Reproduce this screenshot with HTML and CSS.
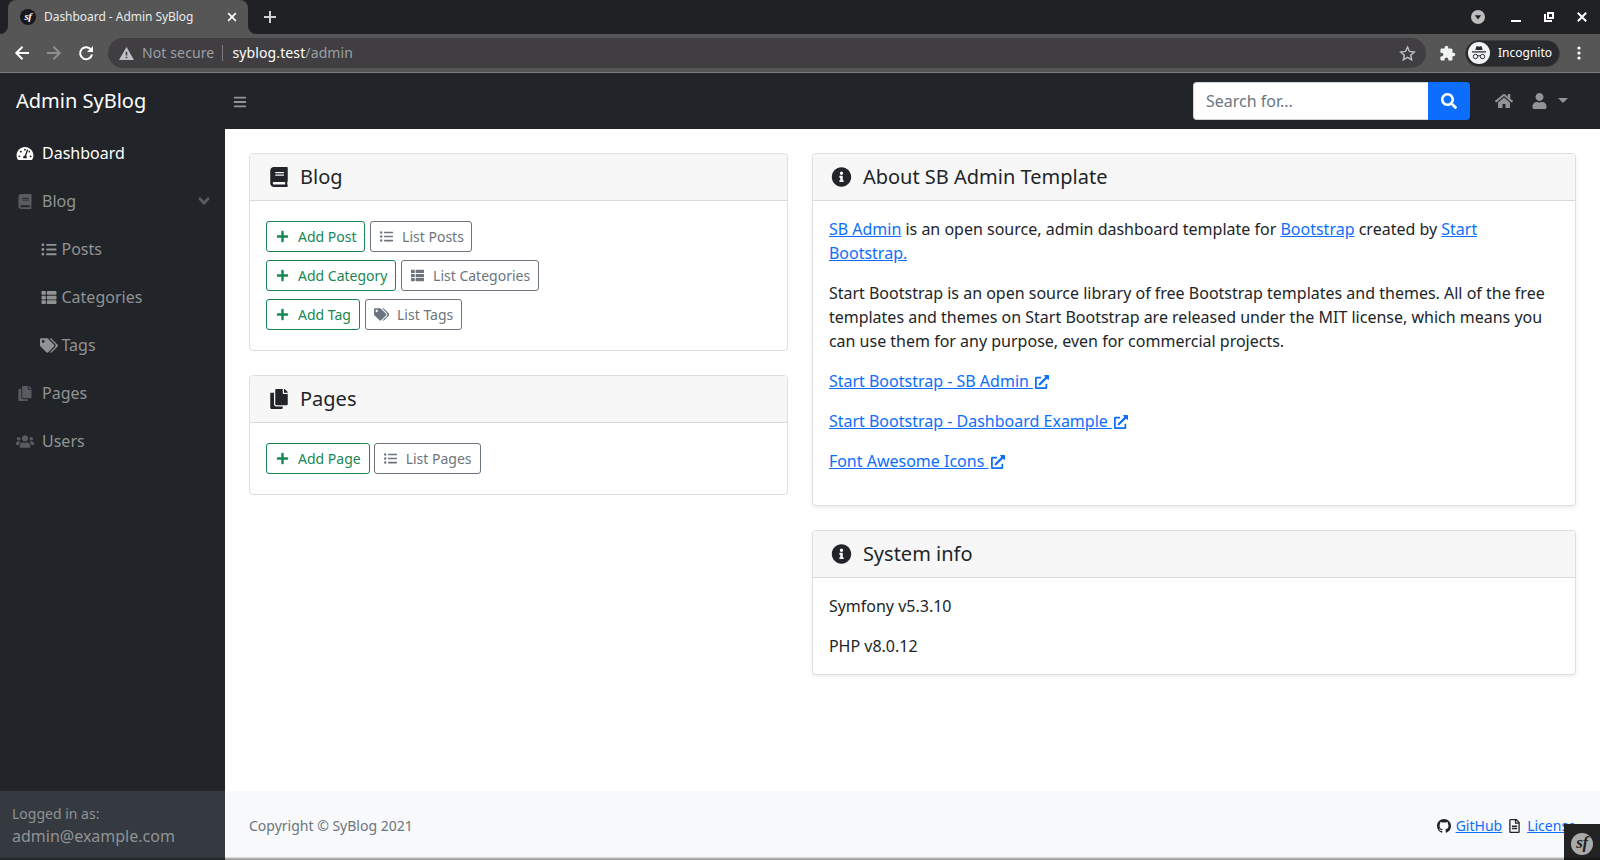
FILE: index.html
```
<!DOCTYPE html>
<html lang="en">
<head>
<meta charset="utf-8">
<title>Dashboard - Admin SyBlog</title>
<link rel="stylesheet" href="styles.css">
</head>
<body>
<svg class="defs" aria-hidden="true">
  <symbol id="gauge" viewBox="0 0 576 512"><path d="M288 32C128.94 32 0 160.94 0 320c0 52.8 14.25 102.26 39.06 144.8 5.61 9.62 16.3 15.2 27.44 15.2h443c11.14 0 21.83-5.58 27.44-15.2C561.75 422.26 576 372.8 576 320c0-159.06-128.94-288-288-288zm0 64c14.71 0 26.58 10.13 30.32 23.65-1.11 2.26-2.64 4.23-3.45 6.67l-9.22 27.67c-5.13 3.49-10.97 6.01-17.64 6.01-17.67 0-32-14.33-32-32S270.33 96 288 96zM96 384c-17.67 0-32-14.33-32-32s14.33-32 32-32 32 14.33 32 32-14.33 32-32 32zm48-160c-17.67 0-32-14.33-32-32s14.33-32 32-32 32 14.33 32 32-14.33 32-32 32zm246.77-72.41l-61.33 184C343.13 347.33 352 364.54 352 384c0 11.72-3.38 22.55-8.88 32H232.88c-5.5-9.45-8.88-20.28-8.88-32 0-33.94 26.5-61.43 59.9-63.59l61.34-184.01c4.17-12.56 17.73-19.45 30.36-15.17 12.57 4.19 19.35 17.79 15.17 30.36zm14.66 57.2l15.52-46.55c3.47-1.29 7.13-2.23 11.05-2.23 17.67 0 32 14.33 32 32s-14.33 32-32 32c-11.38-.01-20.89-6.28-26.57-15.22zM480 384c-17.67 0-32-14.33-32-32s14.33-32 32-32 32 14.33 32 32-14.33 32-32 32z"/></symbol>
  <symbol id="book" viewBox="0 0 448 512"><path d="M448 360V24c0-13.3-10.7-24-24-24H96C43 0 0 43 0 96v320c0 53 43 96 96 96h328c13.3 0 24-10.7 24-24v-16c0-7.5-3.5-14.3-8.9-18.7-4.2-15.4-4.2-59.3 0-74.7 5.4-4.3 8.9-11.1 8.9-18.6zM128 134c0-3.3 2.7-6 6-6h212c3.3 0 6 2.7 6 6v20c0 3.3-2.7 6-6 6H134c-3.3 0-6-2.7-6-6v-20zm0 64c0-3.3 2.7-6 6-6h212c3.3 0 6 2.7 6 6v20c0 3.3-2.7 6-6 6H134c-3.3 0-6-2.7-6-6v-20zm253.400 250H96c-17.700 0-32-14.300-32-32 0-17.600 14.400-32 32-32h285.400c-1.900 17.100-1.900 46.900 0 64z"/></symbol>
  <symbol id="copy" viewBox="0 0 448 512"><path d="M320 448v40c0 13.255-10.745 24-24 24H24c-13.255 0-24-10.745-24-24V120c0-13.255 10.745-24 24-24h72v296c0 30.879 25.121 56 56 56h168zm0-344V0H152c-13.255 0-24 10.745-24 24v368c0 13.255 10.745 24 24 24h272c13.255 0 24-10.745 24-24V128H344c-13.200 0-24-10.800-24-24zm120.971-31.029L375.029 7.029A24 24 0 0 0 358.059 0H352v96h96v-6.059a24 24 0 0 0-7.029-16.970z"/></symbol>
  <symbol id="users" viewBox="0 0 640 512"><path d="M96 224c35.300 0 64-28.700 64-64s-28.700-64-64-64-64 28.700-64 64 28.700 64 64 64zm448 0c35.300 0 64-28.700 64-64s-28.700-64-64-64-64 28.700-64 64 28.700 64 64 64zm32 32h-64c-17.600 0-33.500 7.100-45.100 18.600 40.300 22.100 68.900 62 75.100 109.400h66c17.700 0 32-14.300 32-32v-32c0-35.300-28.700-64-64-64zm-256 0c61.900 0 112-50.100 112-112S381.900 32 320 32 208 82.100 208 144s50.100 112 112 112zm76.800 32h-8.300c-20.800 10-43.900 16-68.500 16s-47.600-6-68.500-16h-8.300C179.600 288 128 339.600 128 403.200V432c0 26.500 21.500 48 48 48h288c26.500 0 48-21.500 48-48v-28.800c0-63.600-51.600-115.200-115.200-115.200zm-223.700-13.400C161.500 263.100 145.600 256 128 256H64c-35.300 0-64 28.700-64 64v32c0 17.700 14.300 32 32 32h65.900c6.300-47.400 34.900-87.300 75.200-109.400z"/></symbol>
  <symbol id="list" viewBox="0 0 512 512"><path d="M48 48a48 48 0 1 0 48 48 48 48 0 0 0-48-48zm0 160a48 48 0 1 0 48 48 48 48 0 0 0-48-48zm0 160a48 48 0 1 0 48 48 48 48 0 0 0-48-48zm448 16H176a16 16 0 0 0-16 16v32a16 16 0 0 0 16 16h320a16 16 0 0 0 16-16v-32a16 16 0 0 0-16-16zm0-320H176a16 16 0 0 0-16 16v32a16 16 0 0 0 16 16h320a16 16 0 0 0 16-16V80a16 16 0 0 0-16-16zm0 160H176a16 16 0 0 0-16 16v32a16 16 0 0 0 16 16h320a16 16 0 0 0 16-16v-32a16 16 0 0 0-16-16z"/></symbol>
  <symbol id="thlist" viewBox="0 0 512 512"><path d="M149.333 216v80c0 13.255-10.745 24-24 24H24c-13.255 0-24-10.745-24-24v-80c0-13.255 10.745-24 24-24h101.333c13.255 0 24 10.745 24 24zM0 376v80c0 13.255 10.745 24 24 24h101.333c13.255 0 24-10.745 24-24v-80c0-13.255-10.745-24-24-24H24c-13.255 0-24 10.745-24 24zM125.333 32H24C10.745 32 0 42.745 0 56v80c0 13.255 10.745 24 24 24h101.333c13.255 0 24-10.745 24-24V56c0-13.255-10.745-24-24-24zm80 448H488c13.255 0 24-10.745 24-24v-80c0-13.255-10.745-24-24-24H205.333c-13.255 0-24 10.745-24 24v80c0 13.255 10.745 24 24 24zm-24-424v80c0 13.255 10.745 24 24 24H488c13.255 0 24-10.745 24-24V56c0-13.255-10.745-24-24-24H205.333c-13.255 0-24 10.745-24 24zm24 264H488c13.255 0 24-10.745 24-24v-80c0-13.255-10.745-24-24-24H205.333c-13.255 0-24 10.745-24 24v80c0 13.255 10.745 24 24 24z"/></symbol>
  <symbol id="tags" viewBox="0 0 640 512"><path d="M497.941 225.941L286.059 14.059A48 48 0 0 0 252.118 0H48C21.490 0 0 21.490 0 48v204.118a48 48 0 0 0 14.059 33.941l211.882 211.882c18.744 18.745 49.136 18.746 67.882 0l204.118-204.118c18.745-18.745 18.745-49.137 0-67.882zM112 160c-26.510 0-48-21.490-48-48s21.490-48 48-48 48 21.490 48 48-21.490 48-48 48zm513.941 133.823L421.823 497.941c-18.745 18.745-49.137 18.745-67.882 0l-.36-.36L527.640 323.522c16.999-16.999 26.360-39.600 26.360-63.640s-9.362-46.641-26.360-63.640L331.397 0h48.721a48 48 0 0 1 33.941 14.059l211.882 211.882c18.745 18.745 18.745 49.137 0 67.882z"/></symbol>
  <symbol id="plus" viewBox="0 0 448 512"><path d="M416 208H272V64c0-17.670-14.330-32-32-32h-32c-17.670 0-32 14.330-32 32v144H32c-17.670 0-32 14.330-32 32v32c0 17.670 14.330 32 32 32h144v144c0 17.670 14.330 32 32 32h32c17.670 0 32-14.330 32-32V304h144c17.670 0 32-14.330 32-32v-32c0-17.670-14.330-32-32-32z"/></symbol>
  <symbol id="info" viewBox="0 0 512 512"><path d="M256 8C119.043 8 8 119.083 8 256c0 136.997 111.043 248 248 248s248-111.003 248-248C504 119.083 392.957 8 256 8zm0 110c23.196 0 42 18.804 42 42s-18.804 42-42 42-42-18.804-42-42 18.804-42 42-42zm56 254c0 6.627-5.373 12-12 12h-88c-6.627 0-12-5.373-12-12v-24c0-6.627 5.373-12 12-12h12v-64h-12c-6.627 0-12-5.373-12-12v-24c0-6.627 5.373-12 12-12h64c6.627 0 12 5.373 12 12v100h12c6.627 0 12 5.373 12 12v24z"/></symbol>
  <symbol id="external" viewBox="0 0 512 512"><path d="M432 320H400a16 16 0 0 0-16 16V448H64V128H208a16 16 0 0 0 16-16V80a16 16 0 0 0-16-16H48A48 48 0 0 0 0 112V464a48 48 0 0 0 48 48H400a48 48 0 0 0 48-48V336A16 16 0 0 0 432 320ZM488 0h-128c-21.370 0-32.050 25.910-17 41l35.730 35.730L135 320.370a24 24 0 0 0 0 34L157.670 377a24 24 0 0 0 34 0L435.280 133.320 471 169c15 15 41 4.500 41-17V24A24 24 0 0 0 488 0Z"/></symbol>
  <symbol id="bars" viewBox="0 0 448 512"><path d="M16 132h416c8.837 0 16-7.163 16-16V76c0-8.837-7.163-16-16-16H16C7.163 60 0 67.163 0 76v40c0 8.837 7.163 16 16 16zm0 160h416c8.837 0 16-7.163 16-16v-40c0-8.837-7.163-16-16-16H16c-8.837 0-16 7.163-16 16v40c0 8.837 7.163 16 16 16zm0 160h416c8.837 0 16-7.163 16-16v-40c0-8.837-7.163-16-16-16H16c-8.837 0-16 7.163-16 16v40c0 8.837 7.163 16 16 16z"/></symbol>
  <symbol id="search" viewBox="0 0 512 512"><path d="M505 442.700L405.300 343c-4.500-4.500-10.600-7-17-7H372c27.600-35.300 44-79.700 44-128C416 93.100 322.900 0 208 0S0 93.100 0 208s93.100 208 208 208c48.300 0 92.700-16.400 128-44v16.300c0 6.400 2.500 12.500 7 17l99.700 99.700c9.400 9.400 24.600 9.400 33.900 0l28.300-28.300c9.400-9.400 9.400-24.600.1-34zM208 336c-70.700 0-128-57.200-128-128 0-70.700 57.200-128 128-128 70.700 0 128 57.200 128 128 0 70.700-57.200 128-128 128z"/></symbol>
  <symbol id="home" viewBox="0 0 576 512"><path d="M280.370 148.260L96 300.110V464a16 16 0 0 0 16 16l112.060-.29a16 16 0 0 0 15.920-16V368a16 16 0 0 1 16-16h64a16 16 0 0 1 16 16v95.640a16 16 0 0 0 16 16.050L464 480a16 16 0 0 0 16-16V300L295.670 148.260a12.190 12.190 0 0 0-15.300 0zM571.600 251.470L488 182.560V44.050a12 12 0 0 0-12-12h-56a12 12 0 0 0-12 12v72.610L318.470 43a48 48 0 0 0-61 0L4.340 251.470a12 12 0 0 0-1.600 16.900l25.500 31A12 12 0 0 0 45.150 301l235.220-193.740a12.190 12.190 0 0 1 15.300 0L530.900 301a12 12 0 0 0 16.900-1.600l25.500-31a12 12 0 0 0-1.700-16.930z"/></symbol>
  <symbol id="user" viewBox="0 0 448 512"><path d="M224 256c70.700 0 128-57.300 128-128S294.700 0 224 0 96 57.300 96 128s57.300 128 128 128zm89.600 32h-16.700c-22.200 10.200-46.900 16-72.900 16s-50.600-5.800-72.900-16h-16.700C60.200 288 0 348.200 0 422.400V464c0 26.500 21.500 48 48 48h352c26.500 0 48-21.500 48-48v-41.600c0-74.200-60.200-134.400-134.400-134.400z"/></symbol>
  <symbol id="angle" viewBox="0 0 320 512"><path d="M143 352.300L7 216.300c-9.400-9.400-9.400-24.600 0-33.900l22.600-22.600c9.400-9.400 24.600-9.400 33.900 0l96.400 96.400 96.400-96.400c9.400-9.400 24.600-9.400 33.900 0l22.600 22.600c9.400 9.400 9.400 24.600 0 33.900l-136 136c-9.200 9.400-24.400 9.400-33.800 0z"/></symbol>
  <symbol id="file" viewBox="0 0 384 512"><path d="M288 248v28c0 6.600-5.400 12-12 12H108c-6.600 0-12-5.400-12-12v-28c0-6.600 5.400-12 12-12h168c6.600 0 12 5.400 12 12zm-12 72H108c-6.600 0-12 5.400-12 12v28c0 6.600 5.400 12 12 12h168c6.600 0 12-5.400 12-12v-28c0-6.600-5.400-12-12-12zm108-188.100V464c0 26.500-21.500 48-48 48H48c-26.500 0-48-21.500-48-48V48C0 21.500 21.500 0 48 0h204.100C264.800 0 277 5.100 286 14.100L369.900 98c9 8.900 14.100 21.200 14.100 33.900zm-128-80V128h76.100L256 51.900zM336 464V176H232c-13.300 0-24-10.700-24-24V48H48v416h288z"/></symbol>
  <symbol id="github" viewBox="0 0 16 16"><path d="M8 0C3.580 0 0 3.580 0 8c0 3.540 2.290 6.530 5.470 7.590.4.070.55-.17.55-.38 0-.19-.01-.82-.01-1.490-2.010.37-2.530-.49-2.690-.94-.09-.23-.48-.94-.82-1.130-.28-.15-.68-.52-.01-.53.63-.01 1.080.58 1.230.82.72 1.210 1.870.87 2.330.66.07-.52.28-.87.51-1.070-1.780-.2-3.640-.89-3.640-3.950 0-.87.31-1.590.82-2.150-.08-.2-.36-1.020.08-2.120 0 0 .67-.21 2.200.82.64-.18 1.320-.27 2-.27s1.360.09 2 .27c1.530-1.040 2.200-.82 2.200-.82.44 1.100.16 1.920.08 2.120.51.56.82 1.270.82 2.150 0 3.070-1.870 3.750-3.650 3.950.29.25.54.73.54 1.480 0 1.070-.01 1.930-.01 2.200 0 .21.15.46.55.38A8.010 8.010 0 0 0 16 8c0-4.420-3.580-8-8-8z"/></symbol>
</svg>

<div class="tabstrip">
  <svg class="flare" viewBox="0 0 8 8"><path d="M8 0v8H0a8 8 0 0 0 8-8z"/></svg>
  <div class="tab">
    <span class="sf sf-tab">sf</span>
    <span class="tab-title">Dashboard - Admin SyBlog</span>
    <svg class="tab-close" viewBox="0 0 10 10"><path d="M1.200 1.200l7.600 7.600M8.800 1.200l-7.600 7.600"/></svg>
  </div>
  <svg class="flare" viewBox="0 0 8 8"><path d="M0 0v8h8a8 8 0 0 1-8-8z"/></svg>
  <svg class="newtab" viewBox="0 0 12 12"><path d="M6 0v12M0 6h12"/></svg>
  <div class="window-buttons">
    <svg width="14" height="14" viewBox="0 0 14 14"><circle cx="7" cy="7" r="7" fill="#bdbdbd"/><path d="M3.800 5.200h6.400L7 9.500z" fill="#202124"/></svg>
    <svg width="10" height="10" viewBox="0 0 10 10"><path d="M0 8h10v2H0z"/></svg>
    <svg width="10" height="10" viewBox="0 0 10 10"><path fill-rule="evenodd" d="M3 0h7v7H3zM5 2v3h3V2zM0 2h2v6h6v2H0z"/></svg>
    <svg width="10" height="10" viewBox="0 0 10 10"><path d="M.8.8l8.400 8.400M9.200.8L.8 9.200" stroke="#fff" stroke-width="2"/></svg>
  </div>
</div>

<div class="toolbar">
  <div class="nav-buttons">
    <svg viewBox="0 0 14 14"><path d="M14 7H1.500M7.500.8L1.300 7l6.200 6.200"/></svg>
    <svg class="dim" viewBox="0 0 14 14"><path d="M0 7h12.500M6.500.8L12.700 7l-6.200 6.200"/></svg>
    <svg viewBox="0 0 14 14"><path d="M12.200 4A6 6 0 1 0 13 8.500"/><path class="solid" d="M14 0v6H8z"/></svg>
  </div>
  <div class="address">
    <svg class="warn" viewBox="0 0 15 13"><path fill-rule="evenodd" d="M7.500 0L15 13H0zM6.700 4.800v3.700h1.600V4.800zM6.700 9.700v1.500h1.600V9.700z"/></svg>
    <span class="insecure">Not secure</span>
    <span class="url"><b>syblog.test</b>/admin</span>
    <svg class="star" viewBox="0 0 24 24"><path d="M12 3l2.800 6.100 6.700.7-5 4.500 1.400 6.600L12 17.500l-5.900 3.400 1.400-6.600-5-4.500 6.700-.7z"/></svg>
  </div>
  <svg class="puzzle" viewBox="0 0 24 24"><path d="M20.500 11H19V7c0-1.100-.9-2-2-2h-4V3.500a2.500 2.500 0 0 0-5 0V5H4c-1.100 0-2 .9-2 2v3.800h1.500a2.700 2.700 0 0 1 0 5.400H2V20c0 1.100.9 2 2 2h3.800v-1.500a2.700 2.700 0 0 1 5.400 0V22H17c1.100 0 2-.9 2-2v-4h1.500a2.500 2.500 0 0 0 0-5z"/></svg>
  <div class="incognito">
    <svg viewBox="0 0 22 22"><circle cx="11" cy="11" r="11" fill="#f1f3f4"/><g fill="#292a2d"><path d="M7.300 8l1.300-4 2.400.7 2.400-.7 1.300 4zM4 9.200h14v1.300H4z"/></g><g fill="none" stroke="#292a2d"><circle cx="7.500" cy="14.500" r="2.200"/><circle cx="14.500" cy="14.500" r="2.200"/><path d="M9.700 14q1.300-.7 2.600 0"/></g></svg>
    <span>Incognito</span>
  </div>
  <svg class="dots" viewBox="0 0 4 14"><circle cx="2" cy="2" r="1.600"/><circle cx="2" cy="7" r="1.600"/><circle cx="2" cy="12" r="1.600"/></svg>
</div>

<header class="topnav">
  <a class="brand">Admin SyBlog</a>
  <svg class="toggle"><use href="#bars"/></svg>
  <form class="searchbox">
    <span class="field">Search for...</span>
    <span class="go"><svg class="i16"><use href="#search"/></svg></span>
  </form>
  <div class="userlinks">
    <svg class="w18"><use href="#home"/></svg>
    <svg class="w14"><use href="#user"/></svg>
    <span class="caret"></span>
  </div>
</header>

<div class="layout">
  <aside class="sidebar">
    <nav>
      <a class="item active"><svg><use href="#gauge"/></svg>Dashboard</a>
      <a class="item"><svg><use href="#book"/></svg>Blog<svg class="arrow"><use href="#angle"/></svg></a>
      <a class="item sub"><svg><use href="#list"/></svg>Posts</a>
      <a class="item sub"><svg><use href="#thlist"/></svg>Categories</a>
      <a class="item sub"><svg><use href="#tags"/></svg>Tags</a>
      <a class="item"><svg><use href="#copy"/></svg>Pages</a>
      <a class="item"><svg><use href="#users"/></svg>Users</a>
    </nav>
    <div class="login"><div class="small">Logged in as:</div>admin@example.com</div>
  </aside>

  <div class="content">
    <main>
      <div class="col-left">
        <section class="card">
          <h5><svg><use href="#book"/></svg>Blog</h5>
          <div class="actions">
            <div class="row">
              <a class="btn add"><svg><use href="#plus"/></svg>Add Post</a>
              <a class="btn"><svg><use href="#list"/></svg>List Posts</a>
            </div>
            <div class="row">
              <a class="btn add"><svg><use href="#plus"/></svg>Add Category</a>
              <a class="btn"><svg><use href="#thlist"/></svg>List Categories</a>
            </div>
            <div class="row">
              <a class="btn add"><svg><use href="#plus"/></svg>Add Tag</a>
              <a class="btn"><svg class="wide"><use href="#tags"/></svg>List Tags</a>
            </div>
          </div>
        </section>
        <section class="card">
          <h5><svg><use href="#copy"/></svg>Pages</h5>
          <div class="actions">
            <div class="row tight">
              <a class="btn add"><svg><use href="#plus"/></svg>Add Page</a>
              <a class="btn"><svg><use href="#list"/></svg>List Pages</a>
            </div>
          </div>
        </section>
      </div>
      <div class="col-right">
        <section class="card shadow">
          <h5><svg class="round"><use href="#info"/></svg>About SB Admin Template</h5>
          <div class="text about">
            <p><a>SB Admin</a> is an open source, admin dashboard template for <a>Bootstrap</a> created by <a>Start Bootstrap.</a></p>
            <p>Start Bootstrap is an open source library of free Bootstrap templates and themes. All of the free templates and themes on Start Bootstrap are released under the MIT license, which means you can use them for any purpose, even for commercial projects.</p>
            <p><a>Start Bootstrap - SB Admin <svg><use href="#external"/></svg></a></p>
            <p><a>Start Bootstrap - Dashboard Example <svg><use href="#external"/></svg></a></p>
            <p><a>Font Awesome Icons <svg><use href="#external"/></svg></a></p>
          </div>
        </section>
        <section class="card shadow">
          <h5><svg class="round"><use href="#info"/></svg>System info</h5>
          <div class="text">
            <p>Symfony v5.3.10</p>
            <p>PHP v8.0.12</p>
          </div>
        </section>
      </div>
    </main>
    <footer>
      <span>Copyright © SyBlog 2021</span>
      <span class="links"><svg class="i14"><use href="#github"/></svg><a>GitHub</a><svg class="doc"><use href="#file"/></svg><a>License</a></span>
    </footer>
  </div>
</div>
<div class="debug"><span class="sf sf-debug">sf</span></div>
<div class="edge"></div>
</body>
</html>
```
FILE: styles.css
```
* { box-sizing: border-box; }

body {
  margin: 0;
  height: 860px;
  display: flex;
  flex-direction: column;
  overflow: hidden;
  position: relative;
  background: #fff;
  color: #212529;
  font: 16px/24px "Noto Sans", sans-serif;
}

svg { fill: currentColor; flex: none; }
.defs { display: none; }

/* browser tab strip */
.tabstrip {
  height: 34px;
  flex: none;
  display: flex;
  align-items: center;
  background: #202124;
  padding: 0 13px 0 0;
  color: #fff;
}
.flare { width: 8px; height: 8px; align-self: flex-end; color: #565656; }
.tab {
  width: 240px;
  height: 34px;
  display: flex;
  align-items: center;
  padding: 0 11px 0 12px;
  background: #565656;
  border-radius: 8px 8px 0 0;
}
.sf {
  display: flex;
  justify-content: center;
  border-radius: 50%;
  font-family: "Liberation Serif", serif;
  font-style: italic;
  font-weight: bold;
  letter-spacing: -.5px;
}
.sf-tab { width: 16px; height: 16px; background: #18171b; color: #fff; font-size: 11px; line-height: 15px; }
.tab-title { margin-left: 8px; font-size: 12px; letter-spacing: -.04px; color: #e8eaed; }
.tab-close { width: 10px; height: 10px; margin-left: auto; stroke: #fff; stroke-width: 1.7; }
.newtab { width: 12px; height: 12px; margin-left: 8px; stroke: #d0d1d3; stroke-width: 2; }
.window-buttons { margin-left: auto; display: flex; align-items: center; gap: 23px; }
.window-buttons svg:first-child { margin-right: 3px; }

/* browser toolbar */
.toolbar {
  height: 39px;
  flex: none;
  display: flex;
  align-items: center;
  padding: 0 19px 0 15px;
  background: #565656;
  border-bottom: 1px solid #7c7c7c;
  color: #fff;
}
.nav-buttons { display: flex; gap: 18px; }
.nav-buttons svg { width: 14px; height: 14px; fill: none; stroke: #fff; stroke-width: 2; overflow: visible; }
.nav-buttons .dim { stroke: #8f8f8f; }
.nav-buttons .solid { fill: #fff; stroke: none; }
.address {
  flex: 1;
  height: 30px;
  margin-left: 15px;
  padding: 0 11px;
  display: flex;
  align-items: center;
  background: #403e41;
  border-radius: 15px;
  font-size: 14px;
  letter-spacing: .12px;
  color: #9aa0a6;
}
.warn { width: 15px; height: 13px; color: #bdc1c6; }
.insecure { margin-left: 8px; padding-right: 8px; line-height: 16px; border-right: 1px solid #7d7c7e; }
.url { margin-left: 9px; }
.url b { color: #fff; font-weight: normal; }
.star { width: 17px; height: 17px; margin-left: auto; margin-right: -1px; fill: none; stroke: #bdc1c6; stroke-width: 2; }
.puzzle { width: 17px; height: 17px; margin-left: 13px; color: #f1f3f4; }
.incognito {
  height: 27px;
  width: 95px;
  margin-left: 9px;
  padding-left: 2px;
  display: flex;
  align-items: center;
  gap: 8px;
  background: #292a2d;
  border: 1px solid #3c3d3f;
  border-radius: 14px;
  font-size: 12px;
}
.incognito svg { width: 22px; height: 22px; }
.dots { width: 4px; height: 14px; margin-left: 17px; }

/* application top bar */
.topnav {
  height: 56px;
  flex: none;
  display: flex;
  align-items: center;
  padding-right: 32px;
  background: #212529;
  color: #919395;
}
.brand { width: 225px; padding-left: 16px; font-size: 20px; line-height: 30px; color: #fff; }
.toggle { width: 14px; height: 14px; margin: 1px 0 0 8px; }
.searchbox { margin-left: auto; display: flex; height: 38px; }
.field {
  width: 235px;
  padding: 6px 12px;
  border: 1px solid #ced4da;
  border-right: 0;
  border-radius: 4px 0 0 4px;
  background: #fff;
  color: #6c757d;
}
.go {
  width: 42px;
  display: flex;
  align-items: center;
  justify-content: center;
  background: #0d6efd;
  border-radius: 0 4px 4px 0;
  color: #fff;
}
.i16 { width: 16px; height: 16px; }
.userlinks { display: flex; align-items: center; margin-left: 25px; }
.w18 { width: 18px; height: 16px; }
.w14 { width: 15px; height: 16px; margin-left: 19px; }
.caret { margin: -2px 0 0 11px; border: 5px solid transparent; border-top-color: #919395; border-bottom: 0; }

/* sidebar and page */
.layout { flex: 1; display: flex; min-height: 0; }
.sidebar { width: 225px; display: flex; flex-direction: column; background: #212529; color: #909294; }
.sidebar nav { flex: 1; }
.item { height: 48px; padding: 0 16px; display: flex; align-items: center; gap: 8px; }
.item svg { width: 18px; height: 15px; color: #595c5f; }
.item.active, .item.active svg { color: #fff; }
.item .arrow { width: 12px; height: 18px; margin: 0 -1px 0 auto; }
.item.sub { padding-left: 40px; gap: 3.5px; }
.item.sub svg { color: #909294; }
.login { height: 69px; padding: 12px; background: #343a40; line-height: 24px; }
.small { font-size: 14px; line-height: 21px; }

.content { flex: 1; display: flex; flex-direction: column; min-width: 0; }
main { flex: 1; padding: 24px; display: grid; grid-template-columns: 538.9px 1fr; gap: 24px; align-items: start; }
.col-left, .col-right { display: grid; gap: 24px; }
.card { border: 1px solid #dfdfdf; border-radius: 4px; background: #fff; }
.shadow { box-shadow: 0 2px 4px rgba(0, 0, 0, .075); }
.card h5 {
  margin: 0;
  height: 47px;
  padding: 0 16px;
  display: flex;
  align-items: center;
  gap: 8px;
  background: #f7f7f7;
  border-bottom: 1px solid #d9d9d9;
  border-radius: 3px 3px 0 0;
  font-size: 20px;
  font-weight: 400;
  line-height: 24px;
}
.card h5 svg { width: 26px; height: 20px; }
.card h5 .round { width: 25px; margin-right: 1px; }
.actions { padding: 20px 16px; display: grid; gap: 8px; }
.row { display: flex; gap: 5px; }
.row.tight { gap: 4px; }
.btn {
  height: 31px;
  padding: 0 8px;
  display: flex;
  align-items: center;
  gap: 8px;
  border: 1px solid #6c757d;
  border-radius: 3px;
  color: #6c757d;
  font-size: 14px;
  line-height: 21px;
}
.row:not(.tight) .btn { padding-right: 7.6px; }
.btn.add { border-color: #198754; color: #198754; }
.btn svg { width: 15px; height: 13px; }
.btn svg.wide { width: 15.5px; }
.text { padding: 16px; }
.about { padding-bottom: 32px; }
.text p { margin: 0 0 16px; }
.text p:last-child { margin-bottom: 0; }
.text a, .links a { color: #0d6efd; text-decoration: underline; }
.text a svg { width: 14px; height: 14px; margin-left: 2px; vertical-align: -2px; }

footer {
  height: 69px;
  padding: 0 24px;
  display: flex;
  align-items: center;
  justify-content: space-between;
  background: #f8f9fa;
  color: #6c757d;
  font-size: 14px;
}
.links { display: flex; align-items: center; }
.links svg { color: #212529; }
.i14 { width: 14px; height: 14px; margin-right: 5px; }
.doc { width: 11px; height: 14px; margin: 0 7px; }

/* overlays */
.debug {
  position: absolute;
  right: 0;
  bottom: 0;
  width: 36px;
  height: 36px;
  display: flex;
  align-items: center;
  justify-content: center;
  background: #222;
}
.sf-debug { width: 22px; height: 22px; margin-top: 3px; background: #aaa; color: #222; font-size: 17px; line-height: 20px; }
.edge { position: absolute; left: 0; right: 0; bottom: 0; height: 3px; background: linear-gradient(rgba(0, 0, 0, .08), rgba(0, 0, 0, .45)); }
```
